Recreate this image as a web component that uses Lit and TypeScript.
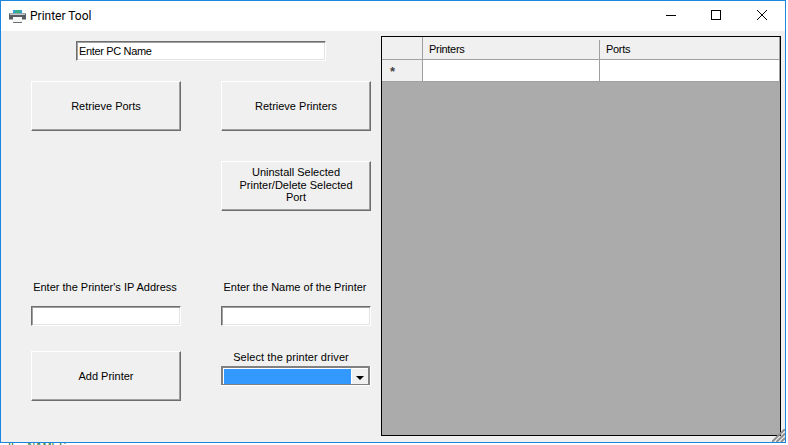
import { LitElement, html, css } from "lit";
import { customElement } from "lit/decorators.js";

@customElement("app-root")
export class AppRoot extends LitElement {
  static styles = css`
    :host { display: block; width: 788px; height: 445px; background: #fff; overflow: hidden; font-family: "Liberation Sans", Arial, sans-serif; font-size: 11px; color: #000; }
    .window { box-sizing: border-box; width: 786px; height: 443px; border: 1px solid #1a86e0; display: flex; flex-direction: column; background: #f0f0f0; }
    .titlebar { height: 30px; flex: none; background: #fff; display: flex; align-items: center; padding-left: 8px; }
    .titlebar svg.app { width: 17px; height: 13px; margin-right: 4px; }
    .title { font-family: Roboto, "Open Sans", sans-serif; font-size: 12px; flex: 1; }
    .ctl { width: 45px; height: 28px; align-self: flex-start; display: flex; align-items: center; justify-content: center; }
    .ctl.wide { width: 47px; }
    .client { flex: 1; display: flex; min-height: 0; position: relative; }
    .left { width: 380px; flex: none; box-sizing: border-box; padding: 10px 0 0 30px; display: flex; flex-direction: column; }
    .pc { box-sizing: border-box; width: 250px; height: 20px; margin-left: 45px; padding: 1px 2px; line-height: 16px; letter-spacing: -0.35px; background: #fff; border: 1px solid; border-color: #6d6d6d #fff #fff #6d6d6d; box-shadow: inset 1px 1px 0 #a0a0a0, inset -1px -1px 0 #e3e3e3; }
    .row { display: grid; grid-template-columns: 150px 150px; column-gap: 40px; }
    .r1 { margin-top: 20px; }
    .r2 { margin-top: 30px; }
    .r3 { margin-top: 69px; text-align: center; line-height: 14px; }
    .r3 > div { padding-right: 2px; }
    .r4 { margin-top: 12px; }
    .r5 { margin-top: 25px; }
    .btn { box-sizing: border-box; height: 50px; display: flex; align-items: center; justify-content: center; text-align: center; line-height: 12.5px; padding: 1px 14px 0; background: #f0f0f0; border: 1px solid; border-color: #fff #6d6d6d #6d6d6d #fff; box-shadow: inset -1px -1px 0 #a0a0a0; }
    .btn.multi { padding: 0 14px 2px; }
    .input { box-sizing: border-box; height: 20px; background: #fff; border: 1px solid; border-color: #6d6d6d #fff #fff #6d6d6d; box-shadow: inset 1px 1px 0 #a0a0a0, inset -1px -1px 0 #e3e3e3; }
    .driver { display: flex; flex-direction: column; align-items: center; }
    .driver .lbl { height: 15px; line-height: 13px; margin-right: 10px; letter-spacing: 0.08px; }
    .combo { box-sizing: border-box; width: 150px; height: 20px; display: flex; background: #fff; padding: 0 1px 1px 0; }
    .combo .in { flex: 1; display: flex; gap: 1px; background: #fff; border: 2px solid #808080; border-bottom-width: 1px; padding: 1px 0 0 1px; box-sizing: border-box; }
    .sel { flex: 1; background: #3399ff; }
    .arrow { width: 16px; background: #f0f0f0; display: flex; align-items: center; justify-content: center; }
    .arrow i { width: 0; height: 0; border: 4px solid transparent; border-top-color: #000; border-bottom-width: 0; margin-top: 2px; }
    .gridwrap { box-sizing: border-box; width: 400px; height: 400px; margin-top: 5px; border: 1px solid #000; background: #ababab; display: flex; flex-direction: column; }
    .gr { display: grid; grid-template-columns: 41px 177px 1fr; flex: none; }
    .gr > div { box-sizing: border-box; border-right: 1px solid #a0a0a0; border-bottom: 1px solid #a0a0a0; padding-left: 6px; }
    .gr.head > div { height: 23px; line-height: 25px; background: #f0f0f0; letter-spacing: -0.3px; }
    .gr.head > .col { border-right: 0; background: #f0f0f0 linear-gradient(#a0a0a0, #a0a0a0) right bottom / 1px 19px no-repeat; }
    .gr.body > div { height: 22px; background: #fff; }
    .gr.body > div.rh { background: #f0f0f0; line-height: 24px; font-size: 13px; font-weight: bold; color: #444; padding-left: 8px; }
    .grip { position: absolute; right: 0; bottom: 0; width: 13px; height: 13px; }
    .strip { height: 2px; overflow: hidden; display: flex; gap: 13px; padding-left: 8px; font-size: 11px; line-height: 11px; color: #2d7a3a; }
    .strip span { margin-top: -2px; }
  `;

  render() {
    return html`
      <div class="window">
        <div class="titlebar">
          <svg class="app" viewBox="0 0 17 13">
            <defs><linearGradient id="ink"><stop offset="0" stop-color="#35a2e8"/><stop offset=".55" stop-color="#33b36b"/><stop offset="1" stop-color="#2d9ce0"/></linearGradient></defs>
            <rect x="4" y="0" width="9" height="3" fill="url(#ink)"/>
            <rect x="0" y="3" width="17" height="7" fill="#565c62"/>
            <rect x="0" y="3" width="17" height="1" fill="#9aa2a9"/>
            <rect x="1" y="4" width="15" height="1" fill="#c4cace"/>
            <rect x="0" y="9" width="17" height="1" fill="#a8adb2"/>
            <rect x="4" y="7" width="9" height="6" fill="#f6f6f6"/>
            <rect x="4" y="12" width="9" height="1" fill="#6a6f74"/>
          </svg>
          <span class="title">Printer Tool</span>
          <div class="ctl"><svg width="10" height="10"><rect x="0" y="5" width="10" height="1" fill="#000"/></svg></div>
          <div class="ctl"><svg width="10" height="10"><rect x=".5" y=".5" width="9" height="9" fill="none" stroke="#000"/></svg></div>
          <div class="ctl wide"><svg width="10" height="10"><path d="M0 0L10 10M10 0L0 10" stroke="#000" stroke-width="1" fill="none"/></svg></div>
        </div>
        <div class="client">
          <div class="left">
            <div class="pc">Enter PC Name</div>
            <div class="row r1">
              <div class="btn">Retrieve Ports</div>
              <div class="btn">Retrieve Printers</div>
            </div>
            <div class="row r2">
              <div></div>
              <div class="btn multi">Uninstall Selected Printer/Delete Selected Port</div>
            </div>
            <div class="row r3">
              <div>Enter the Printer's IP Address</div>
              <div>Enter the Name of the Printer</div>
            </div>
            <div class="row r4">
              <div class="input"></div>
              <div class="input"></div>
            </div>
            <div class="row r5">
              <div class="btn">Add Printer</div>
              <div class="driver">
                <div class="lbl">Select the printer driver</div>
                <div class="combo"><div class="in"><div class="sel"></div><div class="arrow"><i></i></div></div></div>
              </div>
            </div>
          </div>
          <div class="gridwrap">
            <div class="gr head"><div></div><div class="col">Printers</div><div>Ports</div></div>
            <div class="gr body"><div class="rh">*</div><div></div><div></div></div>
          </div>
          <svg class="grip" viewBox="0 0 13 13"><path d="M13 0L0 13M13 4.5L4.5 13M13 9L9 13" stroke="#8f8f8f" stroke-width="2"/></svg>
        </div>
      </div>
      <div class="strip"><span>II</span><span>NAMES</span></div>
    `;
  }
}
